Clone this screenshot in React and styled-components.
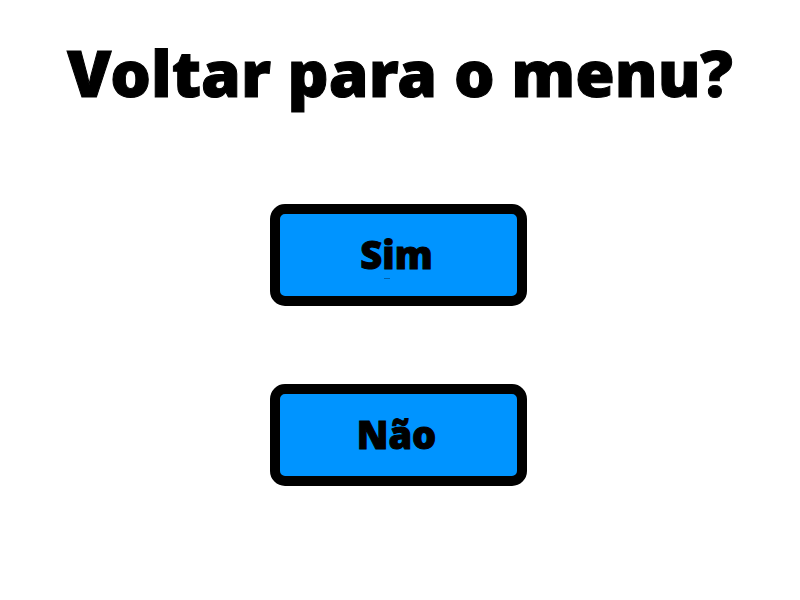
import React from "react";
import styled, { createGlobalStyle } from "styled-components";

const GlobalStyle = createGlobalStyle`
  * { box-sizing: border-box; }
  body { margin: 0; background: #ffffff; color: #000000; }
`;

const Page = styled.main`
  min-height: 100vh;
  display: flex;
  flex-direction: column;
  align-items: center;
  font-family: "Noto Sans", "Open Sans", sans-serif;
`;

const Title = styled.h1`
  margin: 0;
  padding-top: 27px;
  font-size: 64px;
  line-height: 92px;
  font-weight: 900;
  text-align: center;
  -webkit-text-stroke: 1px #000000;
`;

const Actions = styled.div`
  display: flex;
  flex-direction: column;
  gap: 78px;
  margin-top: 85px;
  padding-right: 3px;
`;

const ChoiceButton = styled.button`
  display: flex;
  align-items: center;
  justify-content: center;
  width: 257px;
  height: 102px;
  padding: 0 4px 2px 0;
  border: 10px solid #000000;
  border-radius: 15px;
  background: #0094ff;
  color: #000000;
  font-family: inherit;
  font-size: 38px;
  line-height: 48px;
  font-weight: 900;
  -webkit-text-stroke: 1px #000000;
  cursor: pointer;
`;

const Label = styled.span`
  position: relative;
`;

const Tick = styled.span`
  position: absolute;
  left: 24px;
  bottom: -1px;
  width: 6px;
  height: 1px;
  background: #0062aa;
`;

export default function App() {
  return (
    <Page>
      <GlobalStyle />
      <Title>Voltar para o menu?</Title>
      <Actions>
        <ChoiceButton type="button">
          <Label>
            Sim
            <Tick aria-hidden="true" />
          </Label>
        </ChoiceButton>
        <ChoiceButton type="button">
          <Label>Não</Label>
        </ChoiceButton>
      </Actions>
    </Page>
  );
}
